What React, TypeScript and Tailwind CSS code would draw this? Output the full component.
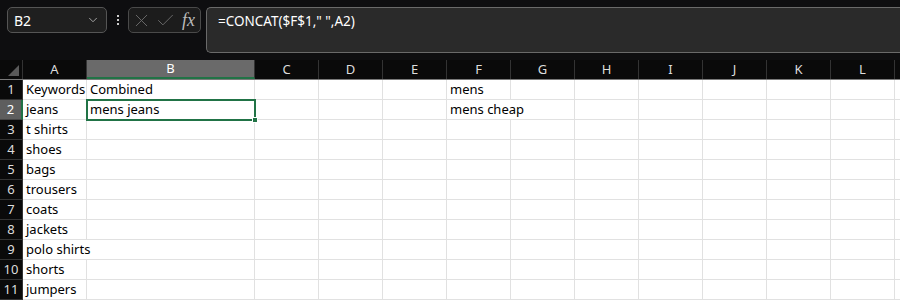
import { ChevronDown, X, Check } from "lucide-react";

const cols = [
  { name: "A", w: 64 },
  { name: "B", w: 168 },
  { name: "C", w: 64 },
  { name: "D", w: 64 },
  { name: "E", w: 64 },
  { name: "F", w: 64 },
  { name: "G", w: 64 },
  { name: "H", w: 64 },
  { name: "I", w: 64 },
  { name: "J", w: 64 },
  { name: "K", w: 64 },
  { name: "L", w: 64 },
  { name: "", w: 64 },
];

const data: Record<string, string>[] = [
  { A: "Keywords", B: "Combined", F: "mens" },
  { A: "jeans", B: "mens jeans", F: "mens cheap" },
  { A: "t shirts" },
  { A: "shoes" },
  { A: "bags" },
  { A: "trousers" },
  { A: "coats" },
  { A: "jackets" },
  { A: "polo shirts" },
  { A: "shorts" },
  { A: "jumpers" },
];

function Toolbar() {
  return (
    <div className="flex h-[60px] items-start bg-[#0e0e10] pl-[7px] pt-[7px]">
      <div className="flex h-[26px] w-[100px] items-center justify-between rounded-[5px] border border-[#555] bg-[#1f1f1f] pl-[6px] pr-[6px] text-[14px] text-white">
        <span>B2</span>
        <ChevronDown size={14} className="text-[#aaa]" strokeWidth={1.6} />
      </div>
      <div className="flex h-[26px] w-[21px] flex-col items-center justify-center gap-[2px]">
        <span className="h-[2px] w-[2px] bg-[#ccc]" />
        <span className="h-[2px] w-[2px] bg-[#ccc]" />
        <span className="h-[2px] w-[2px] bg-[#ccc]" />
      </div>
      <div className="flex h-[26px] w-[73px] items-center gap-[3px] rounded-[5px] border border-[#4a4a4a] bg-[#1c1c1c] pl-[2px]">
        <X size={21} strokeWidth={1.1} className="text-[#6a6a6a]" />
        <Check size={21} strokeWidth={1.1} className="text-[#6a6a6a]" />
        <span className="ml-[3px] font-['Liberation_Serif',serif] text-[18px] italic leading-none text-[#bbb]">
          fx
        </span>
      </div>
      <div className="ml-[5px] h-[46px] flex-1 rounded-l-[5px] border border-r-0 border-[#6a6a6a] bg-[#2a2a2a] pl-[11px] pt-[3px] text-[13.5px] text-white">
        =CONCAT($F$1," ",A2)
      </div>
    </div>
  );
}

export default function App() {
  return (
    <div className="h-[300px] w-[900px] overflow-hidden bg-[#0e0e10] font-['Noto_Sans',sans-serif]">
      <Toolbar />
      <div className="flex h-[20px] border-b border-[#7a7a7a] bg-[#0a0a0a] text-[13px] text-[#ddd]">
        <div className="relative w-[23px] shrink-0 border-r border-[#333]">
          <div className="absolute bottom-[3px] right-[3px] h-0 w-0 border-b-[11px] border-l-[11px] border-b-[#5a5a5a] border-l-transparent" />
        </div>
        {cols.map((c, j) => (
          <div
            key={j}
            style={{ width: c.w }}
            className={
              c.name === "B"
                ? "flex shrink-0 items-center justify-center border-b-2 border-r border-b-[#217346] border-r-[#333] bg-[#6a6a6a] text-white"
                : "flex shrink-0 items-center justify-center border-r border-[#333]"
            }
          >
            {c.name}
          </div>
        ))}
      </div>
      <div className="relative">
        {data.map((row, i) => (
          <div key={i} className="flex h-[20px] text-[13px]">
            <div
              className={
                i === 1
                  ? "flex w-[23px] shrink-0 items-center justify-center border-b border-r-2 border-b-[#444] border-r-[#217346] bg-[#5e5e5e] text-[13px] text-white"
                  : "flex w-[23px] shrink-0 items-center justify-center border-b border-r border-b-[#333] border-r-[#333] bg-[#0a0a0a] text-[13px] text-[#ddd]"
              }
            >
              {i + 1}
            </div>
            {cols.map((c, j) => (
              <div
                key={j}
                style={{ width: c.w }}
                className={
                  row[c.name] && row[c.name].length > 9
                    ? "flex shrink-0 items-center overflow-visible whitespace-nowrap border-b border-[#e1e1e1] bg-white pl-[3px] text-black"
                    : "flex shrink-0 items-center overflow-visible whitespace-nowrap border-b border-r border-[#e1e1e1] bg-white pl-[3px] text-black"
                }
              >
                <span className="relative z-10">{row[c.name]}</span>
              </div>
            ))}
          </div>
        ))}
        <div className="pointer-events-none absolute left-[86px] top-[19px] h-[22px] w-[170px] border-2 border-[#217346]">
          <div className="absolute -bottom-[4px] -right-[4px] h-[6px] w-[6px] border border-white bg-[#217346]" />
        </div>
      </div>
    </div>
  );
}
